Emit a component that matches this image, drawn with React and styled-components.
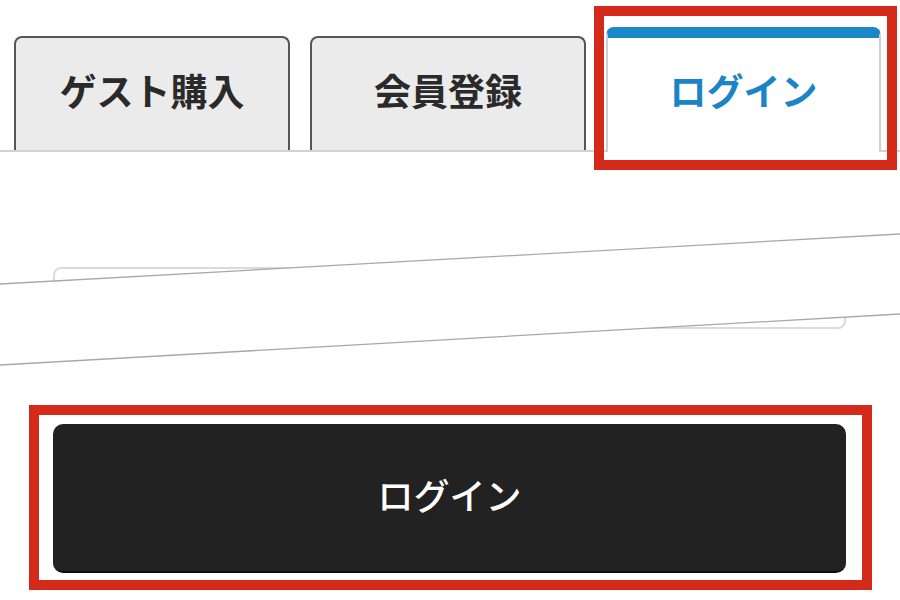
import React from "react";
import styled, { createGlobalStyle } from "styled-components";

const GlobalStyle = createGlobalStyle`
  html, body {
    margin: 0;
    padding: 0;
    background: #fff;
  }
  body {
    font-family: "Noto Sans CJK JP", "Noto Sans", sans-serif;
  }
`;

const Page = styled.div`
  position: relative;
  width: 900px;
  height: 600px;
  overflow: hidden;
  background: #fff;
`;

const TabBar = styled.div`
  display: flex;
  align-items: flex-end;
  gap: 20px;
  height: 150px;
  padding: 0 14px;
  border-bottom: 2px solid #d2d2d2;
`;

const Tab = styled.div`
  box-sizing: border-box;
  display: flex;
  align-items: center;
  justify-content: center;
  width: ${(p) => (p.$active ? "275px" : "276px")};
  height: ${(p) => (p.$active ? "125px" : "114px")};
  margin-bottom: ${(p) => (p.$active ? "-2px" : "0")};
  padding-bottom: ${(p) => (p.$active ? "10px" : "8px")};
  background: ${(p) => (p.$active ? "#fff" : "#ebebeb")};
  border: 2px solid ${(p) => (p.$active ? "#cfcfcf" : "#555")};
  border-top: ${(p) => (p.$active ? "11px solid #1a87c9" : "2px solid #555")};
  border-bottom: none;
  border-radius: 8px 8px 0 0;
  color: ${(p) => (p.$active ? "#1a84c6" : "#2a2a2a")};
  font-size: 37px;
  font-weight: 700;
`;

const Field = styled.div`
  box-sizing: border-box;
  width: 793px;
  height: 62px;
  margin: 115px 0 0 53px;
  border: 2px solid #dadada;
  border-radius: 8px;
`;

const Mark = styled.div`
  box-sizing: border-box;
  border: 10px solid #d32a1a;
`;

const TabMark = styled(Mark)`
  position: absolute;
  left: 594px;
  top: 6px;
  width: 303px;
  height: 164px;
`;

const ButtonMark = styled(Mark)`
  width: 843px;
  height: 185px;
  margin: 76px 0 0 29px;
  padding: 9px 16px 7px 14px;
`;

const SubmitButton = styled.button`
  box-sizing: border-box;
  display: flex;
  align-items: center;
  justify-content: center;
  width: 100%;
  height: 149px;
  padding: 0 0 7px;
  border: none;
  border-bottom: 2px solid #0e0e0e;
  border-radius: 10px;
  background: #222;
  color: #fff;
  font-family: inherit;
  font-size: 36px;
  font-weight: 500;
`;

const Cut = styled.svg`
  position: absolute;
  left: 0;
  top: 0;
  pointer-events: none;
`;

const tabs = ["ゲスト購入", "会員登録", "ログイン"];

export default function App() {
  return (
    <Page>
      <GlobalStyle />
      <TabBar>
        {tabs.map((label, i) => (
          <Tab key={label} $active={i === 2}>
            {label}
          </Tab>
        ))}
      </TabBar>
      <Field />
      <ButtonMark>
        <SubmitButton>ログイン</SubmitButton>
      </ButtonMark>

      {/* omitted part of the form */}
      <Cut width="900" height="600" viewBox="0 0 900 600">
        <polygon points="0,284 900,234 900,314 0,365" fill="#fff" />
        <line x1="0" y1="284" x2="900" y2="234" stroke="#a8a8a8" strokeWidth="1.3" />
        <line x1="0" y1="365" x2="900" y2="314" stroke="#a8a8a8" strokeWidth="1.3" />
      </Cut>
      <TabMark />
    </Page>
  );
}
